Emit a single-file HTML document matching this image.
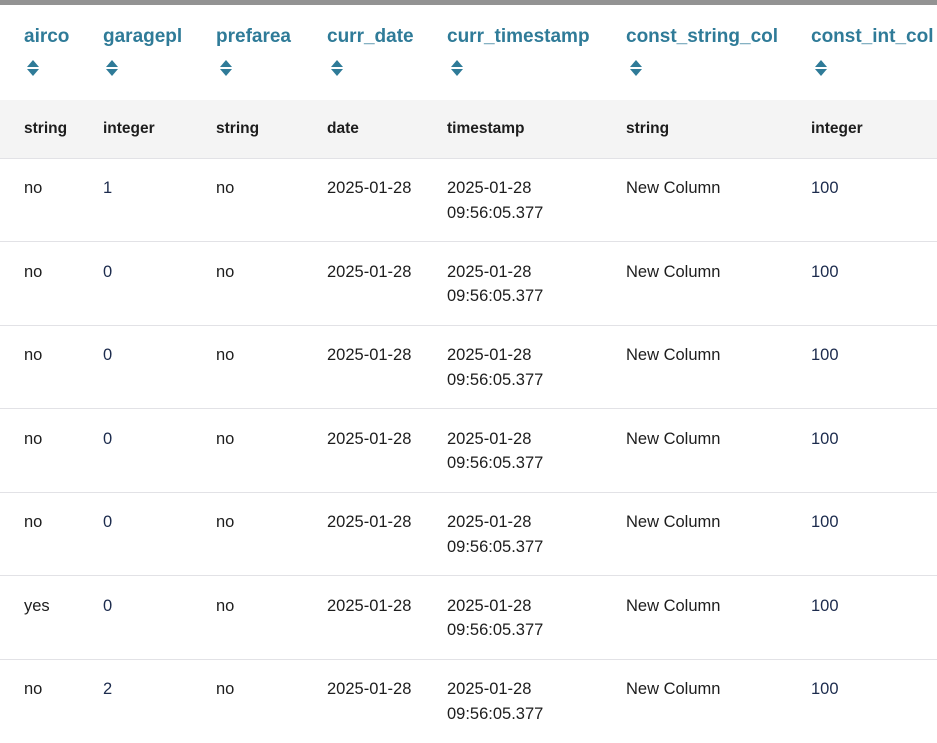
<!DOCTYPE html>
<html><head><style>
body{margin:0;width:937px;height:743px;overflow:hidden;background:#fff;font-family:"Liberation Sans",sans-serif;position:relative}
.top{position:absolute;left:0;top:0;width:937px;height:5px;background:#939393}
.h{position:absolute;top:26px;font-size:19px;font-weight:bold;color:#2f7b98;white-space:nowrap}
.s{position:absolute;top:58px}
.band{position:absolute;left:0;top:100px;width:937px;height:58px;background:#f4f4f4;border-bottom:1px solid #e2e2e6}
.t{position:absolute;top:120px;font-size:15.5px;color:#1d1d1d;font-weight:bold;white-space:nowrap}
.c{position:absolute;font-size:16.5px;color:#1d1d1d;white-space:nowrap;line-height:24.5px}
.n{color:#1c2b4d}
.line{position:absolute;left:0;width:937px;height:1px;background:#e2e2e6}
</style></head><body>
<div class="top"></div>
<div class="h" style="left:24px">airco</div>
<div class="h" style="left:103px">garagepl</div>
<div class="h" style="left:216px">prefarea</div>
<div class="h" style="left:327px">curr_date</div>
<div class="h" style="left:447px">curr_timestamp</div>
<div class="h" style="left:626px">const_string_col</div>
<div class="h" style="left:811px">const_int_col</div>
<svg class="s" style="left:26px" width="14" height="20"><path d="M1 9L7 2L13 9Z M1 11L7 18L13 11Z" fill="#2f7b98"/></svg>
<svg class="s" style="left:105px" width="14" height="20"><path d="M1 9L7 2L13 9Z M1 11L7 18L13 11Z" fill="#2f7b98"/></svg>
<svg class="s" style="left:219px" width="14" height="20"><path d="M1 9L7 2L13 9Z M1 11L7 18L13 11Z" fill="#2f7b98"/></svg>
<svg class="s" style="left:330px" width="14" height="20"><path d="M1 9L7 2L13 9Z M1 11L7 18L13 11Z" fill="#2f7b98"/></svg>
<svg class="s" style="left:450px" width="14" height="20"><path d="M1 9L7 2L13 9Z M1 11L7 18L13 11Z" fill="#2f7b98"/></svg>
<svg class="s" style="left:629px" width="14" height="20"><path d="M1 9L7 2L13 9Z M1 11L7 18L13 11Z" fill="#2f7b98"/></svg>
<svg class="s" style="left:814px" width="14" height="20"><path d="M1 9L7 2L13 9Z M1 11L7 18L13 11Z" fill="#2f7b98"/></svg>
<div class="band"></div>
<div class="t" style="left:24px">string</div>
<div class="t" style="left:103px">integer</div>
<div class="t" style="left:216px">string</div>
<div class="t" style="left:327px">date</div>
<div class="t" style="left:447px">timestamp</div>
<div class="t" style="left:626px">string</div>
<div class="t" style="left:811px">integer</div>
<div id="rows"></div>
<script>
var d=[["no","1"],["no","0"],["no","0"],["no","0"],["no","0"],["yes","0"],["no","2"]];
var h="";
for(var i=0;i<7;i++){
 var y=176+i*83.5;
 h+='<div class="c" style="left:24px;top:'+y+'px">'+d[i][0]+'</div>';
 h+='<div class="c n" style="left:103px;top:'+y+'px">'+d[i][1]+'</div>';
 h+='<div class="c" style="left:216px;top:'+y+'px">no</div>';
 h+='<div class="c" style="left:327px;top:'+y+'px">2025-01-28</div>';
 h+='<div class="c" style="left:447px;top:'+y+'px">2025-01-28<br>09:56:05.377</div>';
 h+='<div class="c" style="left:626px;top:'+y+'px">New Column</div>';
 h+='<div class="c n" style="left:811px;top:'+y+'px">100</div>';
 if(i<6)h+='<div class="line" style="top:'+Math.round(241+i*83.5)+'px"></div>';
}
document.getElementById("rows").innerHTML=h;
</script>
</body></html>
